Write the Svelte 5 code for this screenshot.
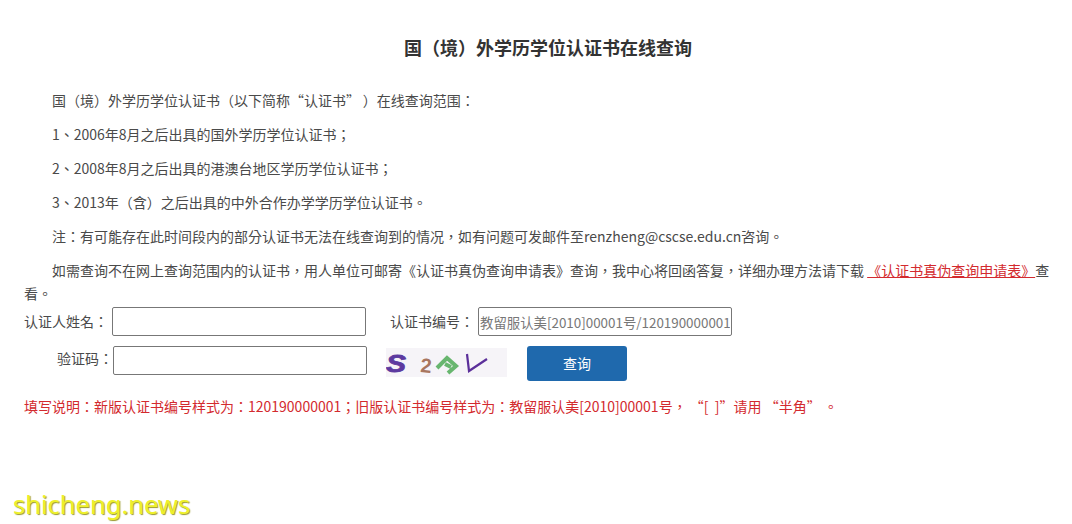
<script>
  const lines = [
    "国（境）外学历学位认证书（以下简称“认证书”\u2009）在线查询范围：",
    "1、2006年8月之后出具的国外学历学位认证书；",
    "2、2008年8月之后出具的港澳台地区学历学位认证书；",
    "3、2013年（含）之后出具的中外合作办学学历学位认证书。",
    "注：有可能存在此时间段内的部分认证书无法在线查询到的情况，如有问题可发邮件至renzheng@cscse.edu.cn咨询。"
  ];
</script>

<main class="page">
  <h1>国（境）外学历学位认证书在线查询</h1>

  {#each lines as line}
    <p>{line}</p>
  {/each}
  <p class="last">如需查询不在网上查询范围内的认证书，用人单位可邮寄《认证书真伪查询申请表》查询，我中心将回函答复，详细办理方法请下载 <a href="#top">《认证书真伪查询申请表》</a>查看。</p>

  <form>
    <div class="row">
      <label class="name-label" for="name">认证人姓名：</label>
      <input id="name" class="name" type="text" />
      <label class="no-label" for="no">认证书编号：</label>
      <input id="no" class="no" type="text" placeholder="教留服认美[2010]00001号/120190000001" />
    </div>
    <div class="row second">
      <label class="code-label" for="code">验证码：</label>
      <input id="code" class="code" type="text" />
      <svg class="captcha" width="121" height="29" viewBox="0 0 121 29">
        <rect width="121" height="29" fill="#f6f4f8" />
        <text x="0" y="24" class="s" transform="scale(1.25 1)">S</text>
        <text x="0" y="0" class="two" transform="translate(34 24) rotate(5)">2</text>
        <path d="M51 20 L61 10 L70 18 L62 25 M59 16 L65 19" fill="none" stroke="#68b66f" stroke-width="4" />
        <path d="M81 6 L83 23 L101 11" fill="none" stroke="#5b2f9a" stroke-width="2.2" />
      </svg>
      <button type="button">查询</button>
    </div>
  </form>

  <p class="note">填写说明：新版认证书编号样式为：120190000001；旧版认证书编号样式为：教留服认美[2010]00001号， “[&nbsp;&nbsp;]”请用 “半角” 。</p>

  <div class="mark">shicheng.news</div>
</main>

<style>
  :global(body) {
    margin: 0;
    background: #fff;
  }

  .page {
    position: relative;
    height: 524px;
    box-sizing: border-box;
    padding: 35px 0 0 24px;
    overflow: hidden;
    font-family: "Noto Sans CJK TC", "Liberation Sans", sans-serif;
    font-size: 14px;
    line-height: 23px;
    color: #4a4a4a;
  }

  h1 {
    margin: 0 0 30px;
    text-align: center;
    font-size: 18px;
    line-height: 24px;
    font-weight: bold;
    color: #333;
  }

  p {
    margin: 0 20px 11px 0;
    text-indent: 28px;
  }

  .last {
    margin-bottom: 0;
  }

  a {
    color: #d32a2e;
    text-decoration: underline;
  }

  form {
    padding-top: 2px;
  }

  .row {
    display: flex;
    align-items: center;
  }

  input {
    box-sizing: border-box;
    height: 29px;
    padding: 0 1px;
    border: 1px solid #777;
    border-radius: 2px;
    font: inherit;
    background: #fff;
  }

  input::placeholder {
    color: #777;
    opacity: 1;
  }

  .name-label {
    width: 88px;
  }

  .name {
    width: 254px;
  }

  .no-label {
    margin-left: 24px;
    width: 88px;
  }

  .no {
    width: 254px;
    font-size: 13.4px;
  }

  .second {
    margin-top: 10px;
    align-items: flex-start;
  }

  .code-label {
    width: 89px;
    text-align: right;
    line-height: 25px;
  }

  .code {
    width: 254px;
  }

  .captcha {
    margin: 2px 0 0 19px;
  }

  .s {
    font: italic bold 24px "Liberation Sans", sans-serif;
    fill: #5d3aa0;
    stroke: #5d3aa0;
    stroke-width: 0.8;
  }

  .two {
    font: bold 20px "Liberation Sans", sans-serif;
    fill: #a9765f;
  }

  button {
    margin-left: 20px;
    width: 100px;
    height: 35px;
    border: 0;
    border-radius: 3px;
    background: #1f69ad;
    color: #fff;
    font: inherit;
  }

  .note {
    margin: 0;
    padding-top: 14px;
    text-indent: 0;
    color: #d32a2e;
  }

  .mark {
    position: absolute;
    left: 13px;
    top: 486px;
    font-family: "Noto Sans", sans-serif;
    font-size: 25.5px;
    line-height: 36px;
    color: #eef02a;
    text-shadow: 1px 1px 1px #99992a;
  }
</style>
